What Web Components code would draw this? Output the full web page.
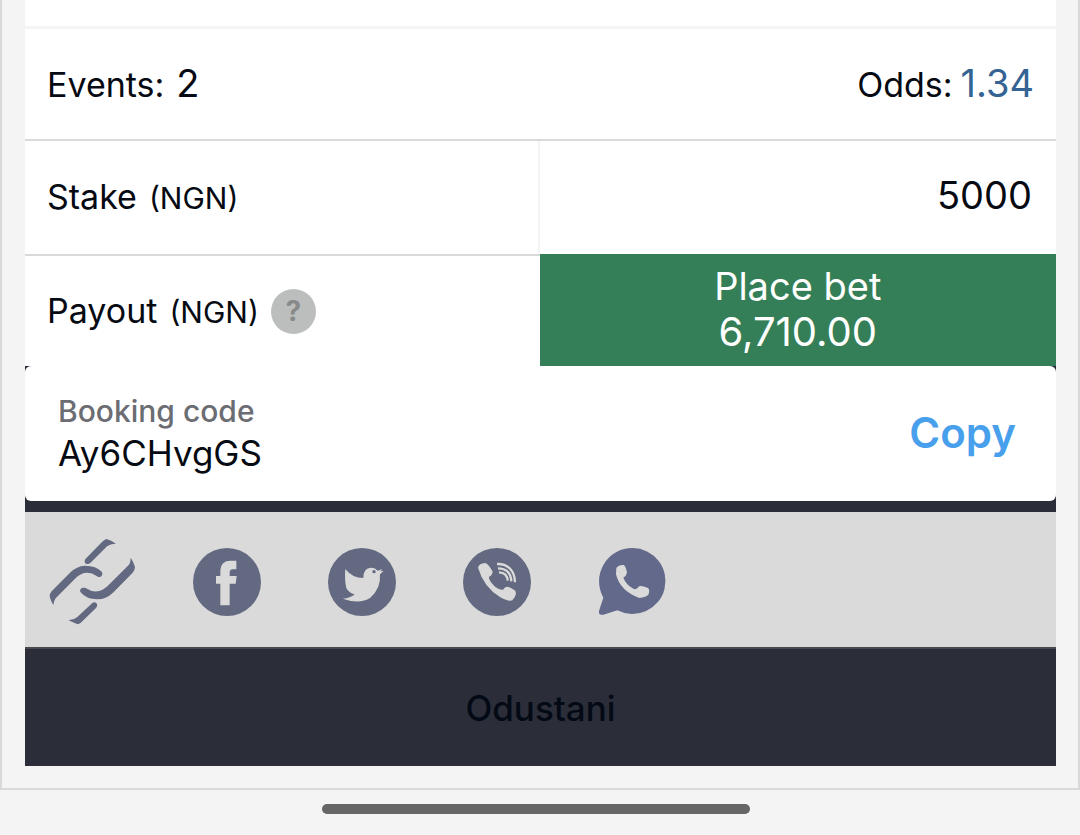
<!DOCTYPE html>
<html lang="en">
<head>
<meta charset="utf-8">
<meta name="viewport" content="width=device-width, initial-scale=1">
<title>Bet slip</title>
<style>
body { margin: 0; background: #f4f4f4; color: #060a12; font-family: Inter, "Open Sans", sans-serif; font-size: 34px; line-height: 44px; }
</style>
</head>
<body>
<bet-slip></bet-slip>
<home-indicator></home-indicator>
<script>
function define(name, html) {
  const template = document.createElement('template');
  template.innerHTML = html;
  customElements.define(name, class extends HTMLElement {
    constructor() {
      super();
      this.attachShadow({ mode: 'open' }).append(template.content.cloneNode(true));
    }
  });
}

define('slip-summary', `
<style>
:host { display: flex; justify-content: space-between; align-items: center; box-sizing: border-box; min-height: 115px; padding: 0 22px; background: #fff; border-top: 3px solid #f4f4f4; border-bottom: 2px solid #d9d9d9; }
</style>
<slot></slot>`);

define('slip-figure', `
<style>
:host { display: flex; align-items: baseline; gap: 12px; }
.value { font-size: 38px; }
:host([accent]) { gap: 8px; }
:host([accent]) .value { color: #356494; }
</style>
<span><slot></slot></span><span class="value"><slot name="value"></slot></span>`);

define('slip-label', `
<style>
:host { display: flex; align-items: baseline; gap: 12px; }
small { font-size: 30px; }
</style>
<span><slot></slot></span><small><slot name="unit"></slot></small>`);

define('stake-form', `
<style>
:host { display: grid; grid-template-columns: calc(50% - 1px) 1fr; grid-template-rows: 113px 112px; background: #fff; }
.cell { display: flex; align-items: center; gap: 12px; padding: 0 22px; }
.stake { border-right: 2px solid #f4f4f4; }
.payout { border-top: 2px solid #d9d9d9; }
input { min-width: 0; border: 0; outline: 0; padding: 0 24px 6px; background: none; color: inherit; font: inherit; font-size: 38px; text-align: right; }
button { border: 0; margin: 0; font: inherit; cursor: pointer; }
.help { width: 45px; height: 45px; padding: 0; border-radius: 50%; background: #bcbdbd; color: #88898a; font-size: 28px; font-weight: 700; line-height: 42px; }
.place { background: #357f58; color: #fff; padding: 0 0 2px; font-size: 38px; line-height: 46px; }
.place span { display: block; }
.place .amount { font-size: 40px; }
</style>
<label class="cell stake" for="stake"><slip-label>Stake<span slot="unit">(NGN)</span></slip-label></label>
<input id="stake" type="text" inputmode="decimal" value="5000">
<div class="cell payout"><slip-label>Payout<span slot="unit">(NGN)</span></slip-label><button class="help" type="button">?</button></div>
<button class="place" type="button"><span>Place bet</span><span class="amount">6,710.00</span></button>`);

define('booking-code', `
<style>
:host { display: flex; justify-content: space-between; align-items: center; min-height: 135px; box-sizing: border-box; padding: 0 40px 2px 33px; border-radius: 6px; background: #fff; }
dl, dd { margin: 0; }
dt { color: #6b6d73; font-size: 30px; font-weight: 500; line-height: 40px; }
dd { font-size: 35px; }
button { border: 0; padding: 0; background: none; color: #48a0ec; font: inherit; font-size: 42px; font-weight: 600; cursor: pointer; }
</style>
<dl><dt><slot name="title"></slot></dt><dd><slot></slot></dd></dl>
<button type="button">Copy</button>`);

define('share-bar', `
<style>
:host { display: flex; background: #dadada; color: #626980; --cut: #dadada; }
a { display: block; color: inherit; }
svg { display: block; width: 135px; height: 135px; fill: currentColor; }
.cut { fill: var(--cut); }
.arc { fill: none; stroke: var(--cut); stroke-width: 7; }
</style>
<a href="#link" aria-label="Copy link"><svg viewBox="-15 -24 405 405">
<path d="M181 129 231 79Q242 70 258 71Q243 61 229 57Q222 60 216 66L167 116C158 127 171 138 181 129Z"/>
<path d="M70 255Q71 243 77 235L135 176Q167 145 201 169C209 176 222 165 215 155Q199 137 165 137Q140 138 120 158L65 214Q58 222 59 230Q63 244 70 255Z"/>
<path d="M302 113Q302 126 297 134L239 192Q205 229 168 205C158 200 146 208 152 217Q169 238 202 238Q229 237 249 218L308 158Q315 150 315 141Q311 126 302 113Z"/>
<path d="M187 249 142 291Q131 301 115 300Q130 308 143 313Q151 311 157 304L198 264C207 254 197 242 187 249Z"/></svg></a>
<a href="#facebook" aria-label="Facebook"><svg viewBox="390 -24 405 405">
<circle cx="591" cy="186" r="102"/>
<path class="cut" d="M571 256V191H558V168H571V151Q572 122 602 122H619V148H608Q599 148 599 158V168H620L617 191H599V256Z"/></svg></a>
<a href="#twitter" aria-label="Twitter"><svg viewBox="-75 -24 405 405">
<circle cx="126" cy="186" r="102"/>
<path class="cut" d="M76 147Q97 174 130 174Q130 144 153 143Q165 142 173 152L188 147 181 154 191 153 180 163Q183 206 151 233Q119 254 68 236Q91 235 104 223Q86 219 79 204Q73 179 76 147Z"/>
<circle cx="162" cy="155" r="5"/></svg></a>
<a href="#viber" aria-label="Viber"><svg viewBox="330 -24 405 405">
<circle cx="531" cy="186" r="102"/>
<path class="cut" d="M474 143Q477 130 496 129Q504 131 517 153Q521 162 507 171Q505 181 526 201Q540 211 549 209Q554 200 562 200Q572 202 586 212Q592 224 577 241Q566 246 541 232Q491 201 474 143Z"/>
<path class="arc" d="M531 132C565 131 584 153 585 187M534 145C558 145 573 159 574 184M537 157Q562 158 563 182"/></svg></a>
<a href="#whatsapp" aria-label="WhatsApp"><svg viewBox="735 -24 405 405" style="color:#62698a">
<path d="M938 84A99 99 0 1 1 892 271L850 284Q835 287 837 273L850 233A100 100 0 0 1 938 84Z"/>
<path class="cut" d="M889 144Q896 134 911 135Q917 137 921 158Q919 168 910 173Q918 193 938 205Q949 213 957 199Q963 195 984 204Q990 208 986 223Q979 233 958 234Q900 213 888 163Z"/></svg></a>`);

define('bet-slip', `
<style>
:host { display: block; border: 2px solid #d9d9d9; border-top: 0; padding: 0 22px 22px 23px; }
main { display: flex; flex-direction: column; background: #2b2e38; }
.top { height: 26px; background: #fff; }
share-bar { margin-top: 11px; }
.cancel { min-height: 119px; border: 0; border-top: 2px solid #48494e; padding: 0; background: #2b2e38; color: #030915; font: inherit; font-size: 35px; font-weight: 500; cursor: pointer; }
</style>
<main>
<div class="top"></div>
<slip-summary>
<slip-figure>Events:<span slot="value">2</span></slip-figure>
<slip-figure accent>Odds:<span slot="value">1.34</span></slip-figure>
</slip-summary>
<stake-form></stake-form>
<booking-code><span slot="title">Booking code</span>Ay6CHvgGS</booking-code>
<share-bar></share-bar>
<button class="cancel" type="button">Odustani</button>
</main>`);

define('home-indicator', `
<style>
:host { display: flex; justify-content: center; padding: 14px 8px 20px 0; }
span { width: 40%; height: 10px; border-radius: 5px; background: #666; }
</style>
<span></span>`);
</script>
</body>
</html>
